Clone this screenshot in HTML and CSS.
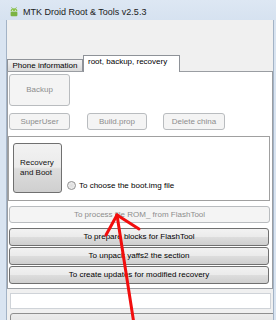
FILE: index.html
```html
<!DOCTYPE html>
<html lang="en">
<head>
    <meta charset="UTF-8">
    <title>MTK Droid Root &amp; Tools v2.5.3</title>
    <link rel="stylesheet" href="styles.css">
</head>
<body>
    <div class="window">
        <div class="title-bar">
            <svg class="app-icon" width="8" height="10" viewBox="0 0 8 10">
                <line x1="1.5" y1="0.3" x2="2.6" y2="1.8" stroke="#7cb342" stroke-width="0.8"/>
                <line x1="6.5" y1="0.3" x2="5.4" y2="1.8" stroke="#7cb342" stroke-width="0.8"/>
                <path d="M0.6 4.2 A3.4 3 0 0 1 7.4 4.2 Z" fill="#8bc34a"/>
                <rect x="0.6" y="4.8" width="6.8" height="4.4" rx="1" fill="#7cb342"/>
                <circle cx="2.6" cy="3.2" r="0.5" fill="#fff"/>
                <circle cx="5.4" cy="3.2" r="0.5" fill="#fff"/>
            </svg>
            <span class="title-text">MTK Droid Root &amp; Tools v2.5.3</span>
        </div>

        <div class="window-body">
            <div class="client">
                <div class="tab-strip">
                    <div class="tab">Phone information</div>
                    <div class="tab active">root, backup, recovery</div>
                </div>

                <div class="tab-panel">
                    <button class="btn btn-backup" disabled>Backup</button>

                    <div class="btn-row">
                        <button class="btn btn-small btn-su" disabled>SuperUser</button>
                        <button class="btn btn-small btn-prop" disabled>Build.prop</button>
                        <button class="btn btn-small btn-china" disabled>Delete china</button>
                    </div>

                    <div class="group-box">
                        <button class="btn btn-recovery">Recovery<br>and Boot</button>
                        <label class="radio">
                            <span class="radio-dot"></span>
                            To choose the boot.img file
                        </label>
                    </div>

                    <button class="btn btn-wide btn-process" disabled>To process file ROM_ from FlashTool</button>

                    <div class="action-list">
                        <button class="btn btn-wide">To prepare blocks for FlashTool</button>
                        <button class="btn btn-wide">To unpack yaffs2 the section</button>
                        <button class="btn btn-wide">To create updates for modified recovery</button>
                    </div>
                </div>

                <div class="log-box"></div>
                <div class="bottom-bar"></div>
            </div>
        </div>

        <!-- red arrow drawn over the screenshot -->
        <svg class="arrow" width="276" height="320" viewBox="0 0 276 320">
            <g stroke="#f20d0d" stroke-width="3" stroke-linecap="round" fill="none">
                <line x1="117" y1="215" x2="134" y2="324"/>
                <line x1="117" y1="215" x2="106" y2="235"/>
                <line x1="117" y1="215" x2="139" y2="229"/>
            </g>
        </svg>
    </div>
</body>
</html>
```

FILE: styles.css
```css
body {
    margin: 0;
    width: 276px;
    height: 320px;
    overflow: hidden;
    font-family: "Liberation Sans", Arial, sans-serif;
    font-size: 8px;
    color: #000;
}

.window {
    position: relative;
    height: 320px;
    background: #d9e4f1;
}

.title-bar {
    height: 20px;
    box-sizing: border-box;
    padding: 3px 0 0 10px;
    display: flex;
    align-items: center;
    gap: 5px;
    background: linear-gradient(#dde7f3, #d6e2f0);
}

.app-icon {
    flex: none;
}

.title-text {
    font-size: 9px;
    color: #1b1b1b;
    white-space: nowrap;
}

.window-body {
    display: flex;
    height: 300px;
    padding: 0 2px 0 6px;
}

.client {
    flex: 1;
    background: #f0f0f0;
    border-left: 1px solid #a3b3c6;
    border-right: 1px solid #a3b3c6;
    overflow: hidden;
}

/* tabs */
.tab-strip {
    height: 51px;
    box-sizing: border-box;
    padding-top: 35px;
    display: flex;
    align-items: flex-end;
}

.tab {
    width: 76px;
    height: 12px;
    box-sizing: border-box;
    border: 1px solid #8e9298;
    border-bottom: none;
    background: linear-gradient(#f2f2f2, #e6e6e6 50%, #d9d9d9);
    line-height: 11px;
    text-align: center;
    white-space: nowrap;
}

.tab.active {
    width: 97px;
    height: 17px;
    margin-bottom: -1px;
    background: #fff;
    position: relative;
    z-index: 1;
    text-align: left;
    padding-left: 4px;
}

.tab-panel {
    width: 266px;
    height: 218px;
    box-sizing: border-box;
    border: 1px solid #9a9da2;
    background: #fff;
    padding: 2px 0 0 1px;
}

/* buttons */
.btn {
    display: block;
    box-sizing: border-box;
    margin: 0;
    padding: 0;
    font-family: inherit;
    font-size: 8px;
    line-height: 10px;
    color: #000;
    border: 1px solid #707070;
    border-radius: 3px;
    background: linear-gradient(#f2f2f2, #ebebeb 48%, #dddddd 52%, #cfcfcf);
    white-space: nowrap;
}

.btn:disabled {
    color: #8d8d8d;
    border-color: #b9bcbf;
    background: #f4f4f4;
}

.btn-backup {
    width: 61px;
    height: 32px;
}

.btn-row {
    display: flex;
    margin-top: 7px;
}

.btn-small {
    height: 17px;
}

.btn-su {
    width: 61px;
}

.btn-prop {
    width: 60px;
    margin-left: 17px;
}

.btn-china {
    width: 62px;
    margin-left: 16px;
}

.group-box {
    width: 262px;
    height: 65px;
    box-sizing: border-box;
    margin: 6px 0 0 -1px;
    border: 1px solid #a0a0a0;
    padding: 6px 0 0 4px;
    display: flex;
    align-items: flex-start;
}

.btn-recovery {
    width: 49px;
    height: 50px;
    text-align: left;
    padding-left: 6px;
    color: #111;
}

.radio {
    display: flex;
    align-items: center;
    gap: 3px;
    margin: 37px 0 0 5px;
    line-height: 11px;
    white-space: nowrap;
}

.radio-dot {
    width: 9px;
    height: 9px;
    box-sizing: border-box;
    border-radius: 50%;
    border: 1px solid #8f8f8f;
    background: radial-gradient(#dcdcdc, #f4f4f4);
}

.btn-wide {
    width: 260px;
    height: 18px;
}

.btn-process {
    width: 261px;
    height: 17px;
    margin-top: 5px;
}

.action-list {
    display: flex;
    flex-direction: column;
    gap: 1px;
    margin-top: 5px;
}

/* bottom area */
.log-box {
    width: 261px;
    height: 16px;
    box-sizing: border-box;
    margin: 4px 0 0 3px;
    background: #fff;
    border: 1px solid #cfd3d8;
}

.bottom-bar {
    height: 20px;
    margin: 4px -4px 0 3px;
    border: 1px solid #8f8f8f;
    border-radius: 3px;
    background: linear-gradient(#ececec, #dadada);
}

.arrow {
    position: absolute;
    top: 0;
    left: 0;
    pointer-events: none;
}
```
